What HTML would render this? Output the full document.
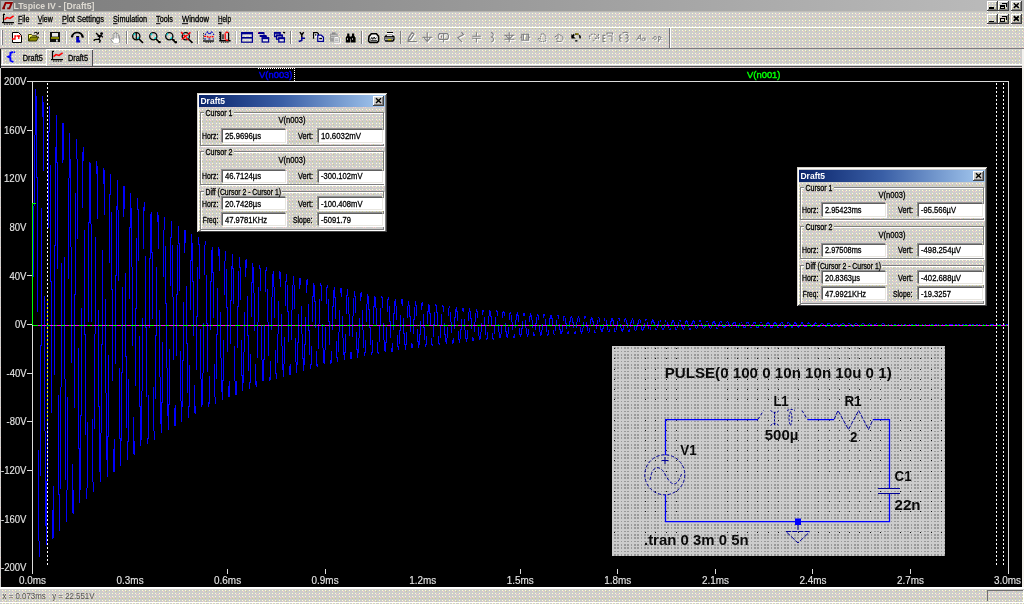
<!DOCTYPE html>
<html><head><meta charset="utf-8"><title>LTspice IV - [Draft5]</title>
<style>
html,body{margin:0;padding:0;}
body{width:1024px;height:604px;overflow:hidden;background:#d4d0c8;position:relative;
 font-family:"Liberation Sans",sans-serif;font-size:9px;color:#000;}
.a{position:absolute;}
#title{left:0;top:0;width:1024px;height:11px;background:linear-gradient(90deg,#7e7e7e 0%,#848484 15%,#bcbcbc 100%);}
#plot{left:1px;top:68px;width:1021px;height:519px;background:#000;}
svg{position:absolute;left:0;top:0;font-family:"Liberation Sans",sans-serif;will-change:transform;}
.dlg{position:absolute;width:190px;height:139px;background:#d4d0c8;
 box-shadow:inset 1px 1px 0 #d4d0c8,inset -1px -1px 0 #404040,inset 2px 2px 0 #fff,inset -2px -2px 0 #808080;}
.dt{position:absolute;left:2px;top:3px;width:186px;height:12px;background:linear-gradient(90deg,#0a246a 0%,#3a5fa6 45%,#a6caf0 100%);}
.grp{position:absolute;left:3px;width:184px;border:1px solid #808080;box-shadow:inset 1px 1px 0 #fff,1px 1px 0 #fff;box-sizing:border-box;}
.ed{position:absolute;width:64px;background:#fff;box-sizing:border-box;border:1px solid;border-color:#606060 #e8e6e0 #e8e6e0 #606060;box-shadow:-1px -1px 0 #909090,1px 1px 0 #fff;}
.gl{position:absolute;background:#d4d0c8;height:6px;}
</style></head><body>

<svg width="1024" height="604" viewBox="0 0 1024 604" shape-rendering="crispEdges"><defs><pattern id="dz" width="10" height="10" patternUnits="userSpaceOnUse"><rect width="10" height="10" fill="#cdcdcc"/><rect x="2" y="0" width="1" height="1" fill="#ffffcc"/><rect x="5" y="0" width="1" height="1" fill="#ffffcc"/><rect x="9" y="0" width="1" height="1" fill="#ffffcc"/><rect x="2" y="3" width="1" height="1" fill="#ffffcc"/><rect x="5" y="3" width="1" height="1" fill="#ffffcc"/><rect x="9" y="3" width="1" height="1" fill="#ffffcc"/><rect x="2" y="6" width="1" height="1" fill="#ffffcc"/><rect x="5" y="6" width="1" height="1" fill="#ffffcc"/><rect x="9" y="6" width="1" height="1" fill="#ffffcc"/><rect x="2" y="8" width="1" height="1" fill="#cccc8c"/><rect x="5" y="8" width="1" height="1" fill="#cccc8c"/><rect x="9" y="8" width="1" height="1" fill="#cccc8c"/><rect x="6" y="1" width="1" height="1" fill="#cccc8c"/><rect x="3" y="1" width="1" height="1" fill="#ffcccc"/><rect x="6" y="4" width="1" height="1" fill="#ffcccc"/><rect x="0" y="7" width="1" height="1" fill="#ffcccc"/><rect x="3" y="7" width="1" height="1" fill="#ffcccc"/><rect x="8" y="4" width="1" height="1" fill="#ffcccc"/></pattern><pattern id="ds" width="10" height="10" patternUnits="userSpaceOnUse"><rect width="10" height="10" fill="#cccccc"/><rect x="1" y="1" width="1" height="1" fill="#999999"/><rect x="1" y="4" width="1" height="2" fill="#999999"/><rect x="1" y="7" width="1" height="2" fill="#999999"/><rect x="4" y="1" width="2" height="1" fill="#999999"/><rect x="4" y="4" width="2" height="2" fill="#999999"/><rect x="4" y="7" width="2" height="2" fill="#999999"/><rect x="7" y="1" width="2" height="1" fill="#999999"/><rect x="7" y="4" width="2" height="2" fill="#999999"/><rect x="7" y="7" width="2" height="2" fill="#999999"/></pattern></defs><rect width="1024" height="604" fill="url(#dz)"/></svg>
<div id="title" class="a"></div>
<div class="a" style="left:0;top:11px;width:1024px;height:1px;background:linear-gradient(90deg,#a8a6a2,#c8c6c0)"></div>
<div class="a" style="left:1px;top:1px;width:12px;height:10px;background:#b4b4b4"></div>
<div class="a" style="left:0;top:27px;width:1024px;height:1px;background:#fff"></div>
<div class="a" style="left:0;top:48px;width:1024px;height:1px;background:#7c7c7c"></div>
<div class="a" style="left:0;top:64px;width:1022px;height:1px;background:#fff"></div>
<div class="a" style="left:0;top:66px;width:1022px;height:1px;background:#505050"></div>
<div class="a" style="left:0;top:49px;width:1px;height:19px;background:#181818"></div>
<div class="a" style="left:1022px;top:49px;width:2px;height:540px;background:#f4f2ee"></div>
<div class="a" style="left:2px;top:51px;width:1px;height:13px;background:#fff"></div>
<div class="a" style="left:46px;top:49px;width:47px;height:17px;box-shadow:inset 1px 1px 0 #fff,inset -1px 0 0 #505050;"></div>
<svg class="a" style="left:47px;top:64px" width="45" height="3" viewBox="47 64 45 3" shape-rendering="crispEdges"><rect x="47" y="64" width="45" height="1" fill="url(#dz)"/></svg>
<div id="plot" class="a"></div>
<div class="a" style="left:0;top:587px;width:1024px;height:2px;background:#fff"></div>
<div class="a" style="left:0;top:602px;width:1024px;height:1px;background:#fff"></div>
<div class="a" style="left:987px;top:590px;width:36px;height:11px;box-shadow:inset 1px 1px 0 #707070;"></div>
<div class="a" style="left:1023px;top:590px;width:1px;height:12px;background:#fff"></div>
<svg width="1024" height="604" viewBox="0 0 1024 604">
<path d="M2.2 8.4h2.8M3.4 8.4L5.6 2.9H11.7L9.4 8.4H7.2" fill="none" stroke="#8a0000" stroke-width="1.9"/>
<path d="M6.4 3.4h3.6" fill="none" stroke="#d00000" stroke-width="0.9"/>
<text x="13.5" y="9.0" font-size="9.2" font-weight="bold" fill="#dedad2" textLength="81.0" lengthAdjust="spacingAndGlyphs">LTspice IV - [Draft5]</text>
<g shape-rendering="crispEdges"><rect x="987" y="1" width="11" height="10" fill="url(#dz)"/><path d="M987 1h11M987.5 1v10" stroke="#fff" fill="none" transform="translate(0,0.5)"/><path d="M987 10.5h11M997.5 1v10" stroke="#404040" fill="none"/><path d="M988 9.5h9M996.5 2v8" stroke="#808080" fill="none"/><rect x="989" y="7" width="5" height="2" fill="#000"/></g>
<g shape-rendering="crispEdges"><rect x="998" y="1" width="11" height="10" fill="url(#dz)"/><path d="M998 1h11M998.5 1v10" stroke="#fff" fill="none" transform="translate(0,0.5)"/><path d="M998 10.5h11M1008.5 1v10" stroke="#404040" fill="none"/><path d="M999 9.5h9M1007.5 2v8" stroke="#808080" fill="none"/><path d="M1002.5 3.5h4v3M1002 3h5" stroke="#000" stroke-width="1" fill="none"/><rect x="1000.5" y="5.5" width="4" height="3" fill="#d4d0c8" stroke="#000"/><rect x="1000" y="5" width="5" height="2" fill="#000"/></g>
<g shape-rendering="crispEdges"><rect x="1011" y="1" width="11" height="10" fill="url(#dz)"/><path d="M1011 1h11M1011.5 1v10" stroke="#fff" fill="none" transform="translate(0,0.5)"/><path d="M1011 10.5h11M1021.5 1v10" stroke="#404040" fill="none"/><path d="M1012 9.5h9M1020.5 2v8" stroke="#808080" fill="none"/></g><path d="M1013.8 3.3l5 4.6M1018.8 3.3l-5 4.6" stroke="#000" stroke-width="1.5" fill="none"/>
<g shape-rendering="crispEdges"><rect x="987" y="14" width="11" height="10" fill="url(#dz)"/><path d="M987 14h11M987.5 14v10" stroke="#fff" fill="none" transform="translate(0,0.5)"/><path d="M987 23.5h11M997.5 14v10" stroke="#404040" fill="none"/><path d="M988 22.5h9M996.5 15v8" stroke="#808080" fill="none"/><rect x="989" y="21" width="5" height="1" fill="#000"/></g>
<g shape-rendering="crispEdges"><rect x="998" y="14" width="11" height="10" fill="url(#dz)"/><path d="M998 14h11M998.5 14v10" stroke="#fff" fill="none" transform="translate(0,0.5)"/><path d="M998 23.5h11M1008.5 14v10" stroke="#404040" fill="none"/><path d="M999 22.5h9M1007.5 15v8" stroke="#808080" fill="none"/><path d="M1002.5 16.5h4v3M1002 16h5" stroke="#000" stroke-width="1" fill="none"/><rect x="1000.5" y="18.5" width="4" height="3" fill="#d4d0c8" stroke="#000"/></g>
<g shape-rendering="crispEdges"><rect x="1011" y="14" width="11" height="10" fill="url(#dz)"/><path d="M1011 14h11M1011.5 14v10" stroke="#fff" fill="none" transform="translate(0,0.5)"/><path d="M1011 23.5h11M1021.5 14v10" stroke="#404040" fill="none"/><path d="M1012 22.5h9M1020.5 15v8" stroke="#808080" fill="none"/></g><path d="M1013.8 16.3l5 4.6M1018.8 16.3l-5 4.6" stroke="#000" stroke-width="1.9" fill="none"/>
<g transform="translate(2.0,13.8)"><rect x="1.5" y="0.5" width="10" height="8" fill="#c8ccc8"/><path d="M1 0.5h2M1.5 0v8.5M0 8.8h12" stroke="#000" stroke-width="1.2" fill="none"/><path d="M2 10.3h9" stroke="#000" stroke-width="1" stroke-dasharray="1.4 1" fill="none"/><path d="M2.5 5.8L5 3.8 8 4.6 11.6 2" stroke="#f00" stroke-width="1.5" fill="none"/></g>
<text x="17.9" y="22.3" font-size="8.8" fill="#000" stroke="#000" stroke-width="0.30" textLength="11.5" lengthAdjust="spacingAndGlyphs">File</text>
<path d="M17.9 23.7h4.5" stroke="#000" stroke-width="1"/>
<text x="37.8" y="22.3" font-size="8.8" fill="#000" stroke="#000" stroke-width="0.30" textLength="15.0" lengthAdjust="spacingAndGlyphs">View</text>
<path d="M37.8 23.7h4.5" stroke="#000" stroke-width="1"/>
<text x="62.0" y="22.3" font-size="8.8" fill="#000" stroke="#000" stroke-width="0.30" textLength="42.0" lengthAdjust="spacingAndGlyphs">Plot Settings</text>
<path d="M62.0 23.7h4.5" stroke="#000" stroke-width="1"/>
<text x="113.0" y="22.3" font-size="8.8" fill="#000" stroke="#000" stroke-width="0.30" textLength="34.0" lengthAdjust="spacingAndGlyphs">Simulation</text>
<path d="M113.0 23.7h4.5" stroke="#000" stroke-width="1"/>
<text x="156.0" y="22.3" font-size="8.8" fill="#000" stroke="#000" stroke-width="0.30" textLength="17.0" lengthAdjust="spacingAndGlyphs">Tools</text>
<path d="M156.0 23.7h4.5" stroke="#000" stroke-width="1"/>
<text x="182.0" y="22.3" font-size="8.8" fill="#000" stroke="#000" stroke-width="0.30" textLength="27.0" lengthAdjust="spacingAndGlyphs">Window</text>
<path d="M182.0 23.7h6.0" stroke="#000" stroke-width="1"/>
<text x="218.0" y="22.3" font-size="8.8" fill="#000" stroke="#000" stroke-width="0.30" textLength="13.0" lengthAdjust="spacingAndGlyphs">Help</text>
<path d="M218.0 23.7h4.5" stroke="#000" stroke-width="1"/>
<path d="M43.5 31v13" stroke="#808080" stroke-opacity="0.35"/><path d="M44.5 31v13" stroke="#fff" stroke-opacity="1.00"/>
<path d="M65.5 31v13" stroke="#808080" stroke-opacity="0.35"/><path d="M66.5 31v13" stroke="#fff" stroke-opacity="1.00"/>
<path d="M87.5 31v13" stroke="#808080" stroke-opacity="0.35"/><path d="M88.5 31v13" stroke="#fff" stroke-opacity="1.00"/>
<path d="M126.5 31v13" stroke="#808080" stroke-opacity="1.00"/><path d="M127.5 31v13" stroke="#fff" stroke-opacity="1.00"/>
<path d="M197.5 31v13" stroke="#808080" stroke-opacity="1.00"/><path d="M198.5 31v13" stroke="#fff" stroke-opacity="1.00"/>
<path d="M235.5 31v13" stroke="#808080" stroke-opacity="0.35"/><path d="M236.5 31v13" stroke="#fff" stroke-opacity="1.00"/>
<path d="M290.5 31v13" stroke="#808080" stroke-opacity="1.00"/><path d="M291.5 31v13" stroke="#fff" stroke-opacity="1.00"/>
<path d="M361.5 31v13" stroke="#808080" stroke-opacity="1.00"/><path d="M362.5 31v13" stroke="#fff" stroke-opacity="1.00"/>
<path d="M400.5 31v13" stroke="#808080" stroke-opacity="1.00"/><path d="M401.5 31v13" stroke="#fff" stroke-opacity="0.40"/>
<path d="M669.5 28v20" stroke="#707070"/><path d="M670.5 28v20" stroke="#fff"/>
<path d="M1.5 30v15" stroke="#fff"/><path d="M2.5 30v15" stroke="#808080"/>
<g transform="translate(12.0,32.0)"><path d="M0.5 0.5h6l3 3v7h-9z" fill="#fff" stroke="#000"/><path d="M0 7h3v-3h1.5M5 4h3.5M6.8 4v3" stroke="#f00" stroke-width="1.3" fill="none"/></g>
<g transform="translate(28.0,32.0)"><path d="M0.5 9V2.5h3l1 1.2h4V5" fill="#ffff66" stroke="#404000"/><path d="M0.5 9l2.2-4h8l-2.4 4z" fill="#8c8c00" stroke="#303000"/><path d="M6 1.2c1.5-1.3 3-1 3.8 0.3M10.3 0v2h-2" stroke="#000" fill="none"/></g>
<g transform="translate(50.0,32.0)"><rect x="0" y="0" width="10" height="10" fill="#101010"/><rect x="2" y="1" width="6" height="3.6" fill="#e8e8e8"/><rect x="1" y="5.2" width="8" height="1.6" fill="#a0a000"/><rect x="6" y="7.6" width="1.8" height="2" fill="#e0e0e0"/></g>
<g transform="translate(71.0,32.0)"><path d="M0.9 5.4C1.2 2.6 3.6 0.9 6.2 0.9 9 0.9 11.4 2.8 11.9 5.6" stroke="#000" stroke-width="2.3" fill="none"/><path d="M2.6 3.6C3.8 2.2 5 1.8 6.3 1.8 7.6 1.8 9 2.4 10 3.6" stroke="#fff" stroke-width="0.9" fill="none"/><path d="M5.2 4.6h3v3.6h1v2.4h-4z" fill="#0000c0"/><path d="M5.2 4.6h3" stroke="#000" stroke-width="1"/></g>
<g transform="translate(93.0,32.0)"><circle cx="8.6" cy="1.6" r="1.4" fill="#000"/><path d="M3 1l2.6 2.6M4.6 4.2l3.4-0.8 1.8 2M7.6 3.6L5.8 7.2 2 7.6 0.6 8.6M5.8 7l1.4 1.6-0.8 2.2" stroke="#000" stroke-width="1.4" fill="none"/></g>
<g transform="translate(110.0,32.0)"><path d="M3.5 11.5C2.5 9.5 0.8 8 0.8 7 1.6 6 2.6 6.6 3.2 7.4V2.2c0.4-1 1.4-1 1.6 0V1c0.4-1 1.6-1 1.8 0v1.2c0.4-1 1.6-0.8 1.6 0.2V4c0.4-0.8 1.4-0.6 1.4 0.4V8.5c0 1.5-0.6 2.4-1 3z" fill="#fff" stroke="#8c8c8c" stroke-width="1"/><path d="M4.9 2.4v4M6.7 2.2v4.2M8.3 3.4v3.2" stroke="#909090" stroke-width="0.9" fill="none"/><path d="M3.2 11.9h6" stroke="#fff" stroke-width="1"/></g>
<g transform="translate(132.0,32.0)"><circle cx="4.3" cy="4.2" r="3.6" fill="none" stroke="#000" stroke-width="1.3"/><path d="M1.8 3.2a2.6 2.6 0 0 1 1.4-1.6M5 6.6a2.6 2.6 0 0 0 1.8-1.8" stroke="#00e0e0" stroke-width="1.2" fill="none"/><path d="M7 7l4 3.8" stroke="#000" stroke-width="1.6"/><path d="M4.3 1v6.4" stroke="#000" stroke-width="1.2"/></g>
<g transform="translate(149.0,32.0)"><circle cx="4.3" cy="4.2" r="3.6" fill="none" stroke="#000" stroke-width="1.3"/><path d="M1.8 3.2a2.6 2.6 0 0 1 1.4-1.6M5 6.6a2.6 2.6 0 0 0 1.8-1.8" stroke="#00e0e0" stroke-width="1.2" fill="none"/><path d="M7 7l4 3.8" stroke="#000" stroke-width="1.6"/><rect x="9.4" y="9" width="2.2" height="2" fill="#000"/></g>
<g transform="translate(165.0,32.0)"><circle cx="4.3" cy="4.2" r="3.6" fill="none" stroke="#000" stroke-width="1.3"/><path d="M1.8 3.2a2.6 2.6 0 0 1 1.4-1.6M5 6.6a2.6 2.6 0 0 0 1.8-1.8" stroke="#00e0e0" stroke-width="1.2" fill="none"/><path d="M7 7l4 3.8" stroke="#000" stroke-width="1.6"/><rect x="7.8" y="7.2" width="1.8" height="1.8" fill="#000"/><rect x="9.8" y="9.2" width="2.2" height="2" fill="#000"/></g>
<g transform="translate(181.5,32.0)"><circle cx="4.3" cy="4.2" r="3.6" fill="none" stroke="#000" stroke-width="1.3"/><path d="M1.8 3.2a2.6 2.6 0 0 1 1.4-1.6M5 6.6a2.6 2.6 0 0 0 1.8-1.8" stroke="#00e0e0" stroke-width="1.2" fill="none"/><path d="M7 7l4 3.8" stroke="#000" stroke-width="1.6"/><path d="M-0.4 0l7.6 8.6M9 0.4l-9 7.2" stroke="#f00" stroke-width="1.5" stroke-dasharray="3 0.7"/></g>
<g transform="translate(203.0,31.6)"><path d="M2 3.2l2.6-3 2 2.6 2-2.6 2.4 3" stroke="#0000c0" stroke-width="1.1" stroke-dasharray="1.6 1" fill="none"/><path d="M1 4.8h3l2 1.2 2-1.2 2.6 0.4" stroke="#f00" stroke-width="1.3" stroke-dasharray="2 0.8" fill="none"/><path d="M1 7.4h10" stroke="#0000a0" stroke-width="1" stroke-dasharray="2 2.4" fill="none"/><path d="M0.5 1.6v7" stroke="#000" stroke-dasharray="1 1.2"/><path d="M0 9.4h11" stroke="#000" stroke-width="1.3"/><path d="M2.5 10.6h7" stroke="#000" stroke-dasharray="1.2 1"/></g>
<g transform="translate(219.0,31.6)"><path d="M1.6 0.6v8.6M0 1h2.4M0.2 9.2h11.4" stroke="#000" stroke-width="1.5" fill="none"/><path d="M0.2 3h1.4M0.2 5h1.4M0.2 7h1.4M2 10.6h8" stroke="#000" stroke-dasharray="1.2 0.9"/><path d="M4 2.6v5M9.6 1v8.4" stroke="#000" stroke-width="1.2"/><path d="M6.6 1.4a2 3.4 0 0 1 2.6 0M6.8 8a2 3 0 0 0 2.4 0.2M6.2 1.6v6.2" stroke="#f00" stroke-width="1.3" fill="none"/></g>
<g transform="translate(241.0,32.0)"><rect x="0.6" y="0.6" width="10.8" height="9.6" fill="none" stroke="#000090" stroke-width="1.2"/><rect x="1" y="1" width="10" height="1.3" fill="#000090"/><rect x="1" y="5" width="10" height="1.6" fill="#000090"/><path d="M2 3.4h8M2 7.8h8" stroke="#e8e8e8" stroke-width="0.8"/></g>
<g transform="translate(258.0,32.0)"><rect x="0" y="0" width="6.4" height="2" fill="#000090"/><rect x="1.6" y="3" width="7" height="2" fill="#000090"/><path d="M8.2 4v2M6 1.4v1.4" stroke="#000090" stroke-width="1.2"/><rect x="4.2" y="5.8" width="6.4" height="4.2" fill="#e8e8e8" stroke="#000090" stroke-width="1.3"/><rect x="3.8" y="5.4" width="7.2" height="1.8" fill="#000090"/><path d="M0 0l1 1" stroke="#c00060" stroke-width="1"/></g>
<g transform="translate(274.0,32.0)"><rect x="0.6" y="0.6" width="5.4" height="4" fill="none" stroke="#000090" stroke-width="1.3"/><rect x="0" y="0" width="6.6" height="1.8" fill="#000090"/><rect x="2.6" y="3.2" width="5.6" height="4" fill="#d4d0c8" stroke="#000090" stroke-width="1.3"/><rect x="2" y="2.6" width="6.8" height="1.8" fill="#000090"/><rect x="4.8" y="6" width="5.6" height="4" fill="#e8e8e8" stroke="#000090" stroke-width="1.3"/><rect x="4.2" y="5.4" width="6.8" height="1.8" fill="#000090"/><path d="M9 0.4l1.6 0.2 0 1" stroke="#000" stroke-width="1.1" fill="none"/></g>
<g transform="translate(298.5,32.0)"><path d="M1.4 0.2l2 3M5.2 0.2l-2 3M3.3 2.6v2.6" stroke="#000" stroke-width="1.5" fill="none"/><path d="M3.3 5v4M3.3 6.2h3.2M3.3 8.6l-2.4 0.6 0.4 0.8" stroke="#000090" stroke-width="1.5" fill="none"/></g>
<g transform="translate(313.0,32.0)"><path d="M0.6 6.8V0.6h3.6l1.2 1.2v2" stroke="#000" stroke-width="1.3" fill="#fff"/><rect x="2" y="2.2" width="1.4" height="1.4" fill="#000"/><path d="M4.8 3.2h3.4l2.2 2v4.2h-5.6z" fill="#fff" stroke="#000090" stroke-width="1.3"/><rect x="6.2" y="5.8" width="2.8" height="1.5" fill="#000"/></g>
<g transform="translate(329.0,32.0)"><rect x="1" y="1.6" width="7.6" height="8" fill="#9c9c9c"/><rect x="3" y="0.4" width="3.6" height="2" fill="#8a8a8a"/><path d="M2 3.4h5.6M2 5.4h3" stroke="#c8c8c8"/><path d="M5 4.6h4l1.6 1.6V10.4h-5.6z" fill="#fff" stroke="#a4a4a4" stroke-width="0.9"/><path d="M6 7h3.6M6 8.8h3.6" stroke="#909090" stroke-width="0.9"/><path d="M5 11.2h6.6v-5" stroke="#fff" fill="none"/></g>
<g transform="translate(345.6,33.0)"><path d="M1.6 0.6h2.2v2.2l1 2v4.8H0.2V4.6l1.4-2zM6.4 0.6h2.2v2.2l1.4 2v4.8H5.4V4.6l1-2z" fill="#000"/><rect x="3.8" y="3.6" width="2.6" height="2.2" fill="#000"/><rect x="1.4" y="5.4" width="1" height="1.2" fill="#fff"/><rect x="6.4" y="5.4" width="1" height="1.2" fill="#fff"/></g>
<g transform="translate(368.0,33.0)"><path d="M1 3.4L3.4 0.8h5L10.6 3.4V8l-1.4 1.4H1.8L0.6 8z" fill="#f4f4f4" stroke="#000" stroke-width="1.6"/><path d="M2.6 6.6l1.2-2.2 1 2 1.4-2.4 1 2.2 1.2-1.6" stroke="#000" stroke-width="0.9" fill="none"/><path d="M2.4 7.6h6.6" stroke="#000" stroke-width="0.8"/></g>
<g transform="translate(384.0,32.0)"><path d="M3 0.6h6" stroke="#000" stroke-width="1.2"/><path d="M2.4 1.8h6l1.6 1.4" stroke="#fff" stroke-width="1.4" fill="none"/><path d="M0.4 4.4L2.2 2.8h6.4l2 1.6V8l-1.4 1.8H1.4L0.4 8z" fill="#000"/><path d="M2.8 3.6h5.6" stroke="#fff" stroke-width="1"/><path d="M1 6h8.6" stroke="#e8e8e8" stroke-width="1"/><path d="M4 7.7h3.4" stroke="#e8e000" stroke-width="1.3"/><path d="M1 7.7h3M7.4 7.7h1.6" stroke="#d0d0d0" stroke-width="1"/></g>
<g transform="translate(408.0,33.0)" stroke="#fff" fill="none"><path d="M5 0.6l2 1.6-3.6 5.2-2.2 1.2 0.4-2.6zM0.6 9.6h9.2" stroke-width="1.3"/></g><g transform="translate(407.0,32.0)" stroke="#808080" fill="none"><path d="M5 0.6l2 1.6-3.6 5.2-2.2 1.2 0.4-2.6zM0.6 9.6h9.2" stroke-width="1.3"/></g>
<g transform="translate(423.0,33.0)" stroke="#fff" fill="none"><path d="M5.2 0.2v9.6M0.2 5.2h10.2M2 5.6l3.2 4 3.2-4" stroke-width="1.1"/></g><g transform="translate(422.0,32.0)" stroke="#808080" fill="none"><path d="M5.2 0.2v9.6M0.2 5.2h10.2M2 5.6l3.2 4 3.2-4" stroke-width="1.1"/></g>
<g transform="translate(439.0,34.0)" stroke="#fff" fill="none"><path d="M1.6 0.6h7.6l1.2 1.6v2.6l-1.2 1.6H1.6L0.4 4.8V2.2zM5.6 0.6v8.6M3.6 2.4v2.4" stroke-width="1.1"/></g><g transform="translate(438.0,33.0)" stroke="#808080" fill="none"><path d="M1.6 0.6h7.6l1.2 1.6v2.6l-1.2 1.6H1.6L0.4 4.8V2.2zM5.6 0.6v8.6M3.6 2.4v2.4" stroke-width="1.1"/></g>
<g transform="translate(458.0,33.0)" stroke="#fff" fill="none"><path d="M4.4 0.2L6.6 2.6 0.8 5.6 5 10.2" stroke-width="1.1"/></g><g transform="translate(457.0,32.0)" stroke="#808080" fill="none"><path d="M4.4 0.2L6.6 2.6 0.8 5.6 5 10.2" stroke-width="1.1"/></g>
<g transform="translate(473.0,33.0)" stroke="#fff" fill="none"><path d="M4.4 0.2v4M0.2 4.2h8.6M0.2 6.2h8.6M4.4 6.2v4" stroke-width="1.1"/></g><g transform="translate(472.0,32.0)" stroke="#808080" fill="none"><path d="M4.4 0.2v4M0.2 4.2h8.6M0.2 6.2h8.6M4.4 6.2v4" stroke-width="1.1"/></g>
<g transform="translate(491.0,33.0)" stroke="#fff" fill="none"><path d="M1 0.2c3 1.4 3 3.4 0.4 4.8 3 1.4 3 3.6 0 5" stroke-width="1.1"/></g><g transform="translate(490.0,32.0)" stroke="#808080" fill="none"><path d="M1 0.2c3 1.4 3 3.4 0.4 4.8 3 1.4 3 3.6 0 5" stroke-width="1.1"/></g>
<g transform="translate(505.0,33.0)" stroke="#fff" fill="none"><path d="M5.2 0.2v10M0.2 3.2h10.2M0.4 7.2h10M1.6 3.4l3.6 3.8 3.6-3.8" stroke-width="1.1"/></g><g transform="translate(504.0,32.0)" stroke="#808080" fill="none"><path d="M5.2 0.2v10M0.2 3.2h10.2M0.4 7.2h10M1.6 3.4l3.6 3.8 3.6-3.8" stroke-width="1.1"/></g>
<g transform="translate(521.0,34.0)" stroke="#fff" fill="none"><path d="M0.2 4.2h1.6M8.6 4.2h1.6M1.8 1.2h6.8v6H1.8zM3.4 1.2v6M7 1.2v6" stroke-width="1.1"/></g><g transform="translate(520.0,33.0)" stroke="#808080" fill="none"><path d="M0.2 4.2h1.6M8.6 4.2h1.6M1.8 1.2h6.8v6H1.8zM3.4 1.2v6M7 1.2v6" stroke-width="1.1"/></g>
<g transform="translate(538.0,33.0)" stroke="#fff" fill="none"><path d="M2 6.4l-1.4 0.8M3 9.6c-1-1.6-1.6-2.4-1-3 0.6-0.4 1.2 0.2 1.6 0.8V3c0.4-0.8 1.2-0.6 1.4 0V1.4c0.4-0.8 1.2-0.6 1.4 0V2.4c0.4-0.8 1.2-0.4 1.2 0.2V3.6c0.4-0.6 1.2-0.4 1.2 0.4V7.4c0 1-0.4 1.6-0.8 2.2z" stroke-width="1" stroke-dasharray="1.6 0.8"/></g><g transform="translate(537.0,32.0)" stroke="#808080" fill="none"><path d="M2 6.4l-1.4 0.8M3 9.6c-1-1.6-1.6-2.4-1-3 0.6-0.4 1.2 0.2 1.6 0.8V3c0.4-0.8 1.2-0.6 1.4 0V1.4c0.4-0.8 1.2-0.6 1.4 0V2.4c0.4-0.8 1.2-0.4 1.2 0.2V3.6c0.4-0.6 1.2-0.4 1.2 0.4V7.4c0 1-0.4 1.6-0.8 2.2z" stroke-width="1" stroke-dasharray="1.6 0.8"/></g>
<g transform="translate(555.0,33.0)" stroke="#fff" fill="none"><path d="M0.6 5.2l3-2.2M2.4 9.6h5.2M3.6 8.6c-1-1.4-1.4-2-0.8-2.6 0.6-0.2 1 0.2 1.2 0.6V2.4c0.4-0.8 1.2-0.6 1.4 0.2l2.6 1.6c0.8 0.4 1 1 1 2 0 1.2-0.6 1.8-1 2.4" stroke-width="1"/></g><g transform="translate(554.0,32.0)" stroke="#808080" fill="none"><path d="M0.6 5.2l3-2.2M2.4 9.6h5.2M3.6 8.6c-1-1.4-1.4-2-0.8-2.6 0.6-0.2 1 0.2 1.2 0.6V2.4c0.4-0.8 1.2-0.6 1.4 0.2l2.6 1.6c0.8 0.4 1 1 1 2 0 1.2-0.6 1.8-1 2.4" stroke-width="1"/></g>
<g transform="translate(571.0,33.0)"><path d="M1.2 4.2C2.2 1.2 5.4 0.2 7.6 1.6 9 2.6 9.6 4.2 8.8 6" stroke="#000" stroke-width="1.6" fill="none" stroke-dasharray="3.4 1"/><path d="M0.4 1v4.4h4.2z" fill="#000"/><path d="M4.6 1a4 4 0 0 1 2.8 0.4" stroke="#a09000" stroke-width="1.4" fill="none"/><rect x="4.2" y="7.2" width="2.2" height="1.3" fill="#000"/></g>
<g transform="translate(590.0,34.0)" stroke="#fff" fill="none"><path d="M8.4 4.2C7.4 1.2 4.2 0.2 2 1.6 0.6 2.6 0 4.2 0.8 6M9.4 1v4.4H5.2M3.6 7.8h2.2" stroke-width="1.1" stroke-dasharray="2 1"/></g><g transform="translate(589.0,33.0)" stroke="#808080" fill="none"><path d="M8.4 4.2C7.4 1.2 4.2 0.2 2 1.6 0.6 2.6 0 4.2 0.8 6M9.4 1v4.4H5.2M3.6 7.8h2.2" stroke-width="1.1" stroke-dasharray="2 1"/></g>
<g transform="translate(603.0,33.0)" stroke="#fff" fill="none"><path d="M1 3v7M1 3.4h2.4M1 6.4h2M1 9.6h2.4M5 2.8V1h5.4v1.8M5.4 4h4.8M10 4.4v5.4" stroke-width="1.1"/></g><g transform="translate(602.0,32.0)" stroke="#808080" fill="none"><path d="M1 3v7M1 3.4h2.4M1 6.4h2M1 9.6h2.4M5 2.8V1h5.4v1.8M5.4 4h4.8M10 4.4v5.4" stroke-width="1.1"/></g>
<g transform="translate(619.0,33.0)" stroke="#fff" fill="none"><path d="M3.4 2.6C1 3 1 5.4 3 6 1 6.6 1 9 3.4 9.6M4.4 1.2C6 0.2 8.8 0.2 10.4 1.4M8.4 2.6C10.8 3 10.8 5.4 8.8 6 10.8 6.6 10.8 9 8.4 9.6M7.6 2.6h2M7.6 9.6h2" stroke-width="1.1"/></g><g transform="translate(618.0,32.0)" stroke="#808080" fill="none"><path d="M3.4 2.6C1 3 1 5.4 3 6 1 6.6 1 9 3.4 9.6M4.4 1.2C6 0.2 8.8 0.2 10.4 1.4M8.4 2.6C10.8 3 10.8 5.4 8.8 6 10.8 6.6 10.8 9 8.4 9.6M7.6 2.6h2M7.6 9.6h2" stroke-width="1.1"/></g>
<g transform="translate(637.0,35.0)" stroke="#fff" fill="none"><path d="M0.2 6.6L4.4 0.6 5 6.6M1.8 4.4h3M7.4 4a1.4 1.4 0 1 0 0.1 0M9 3.6v3" stroke-width="1"/></g><g transform="translate(636.0,34.0)" stroke="#808080" fill="none"><path d="M0.2 6.6L4.4 0.6 5 6.6M1.8 4.4h3M7.4 4a1.4 1.4 0 1 0 0.1 0M9 3.6v3" stroke-width="1"/></g>
<g transform="translate(653.0,35.0)" stroke="#fff" fill="none"><path d="M0.4 4.4h0.8M3 2.4a1.3 1.6 0 1 0 0.1 0M6.6 2.2V8M6.8 2.6a1.3 1.6 0 1 1-0.1 3M9.6 3v0.6M9.6 5v0.6" stroke-width="1"/></g><g transform="translate(652.0,34.0)" stroke="#808080" fill="none"><path d="M0.4 4.4h0.8M3 2.4a1.3 1.6 0 1 0 0.1 0M6.6 2.2V8M6.8 2.6a1.3 1.6 0 1 1-0.1 3M9.6 3v0.6M9.6 5v0.6" stroke-width="1"/></g>
<path d="M13 52l-2.6 1v2.6l-2.2 1.2 2.2 1.2v2.6l3 1.4" stroke="#0000ff" stroke-width="1.9" fill="none"/><rect x="13.6" y="51.4" width="1.5" height="1.5" fill="#0000ff"/>
<text x="22.8" y="61.0" font-size="8.8" fill="#000" stroke="#000" stroke-width="0.30" textLength="20.0" lengthAdjust="spacingAndGlyphs">Draft5</text>
<g transform="translate(51.0,50.8)"><rect x="1.5" y="0.5" width="10" height="8" fill="#c8ccc8"/><path d="M1 0.5h2M1.5 0v8.5M0 8.8h12" stroke="#000" stroke-width="1.2" fill="none"/><path d="M2 10.3h9" stroke="#000" stroke-width="1" stroke-dasharray="1.4 1" fill="none"/><path d="M2.5 5.8L5 3.8 8 4.6 11.6 2" stroke="#f00" stroke-width="1.5" fill="none"/></g>
<text x="68.0" y="60.6" font-size="8.8" fill="#000" stroke="#000" stroke-width="0.30" textLength="20.0" lengthAdjust="spacingAndGlyphs">Draft5</text>
<text x="2.5" y="598.6" font-size="8.6" fill="#000" textLength="92.0" lengthAdjust="spacingAndGlyphs" fill-opacity="0.62">x = 0.073ms &#160; y = 22.551V</text>
<g shape-rendering="crispEdges">
<path d="M33.5 206V277M34.5 135V206M35.5 89V135M36.5 96V178M37.5 177V312M38.5 450V541M39.5 541V557M40.5 345V476M41.5 208V346M42.5 96V117M43.5 102V171M44.5 296V431M45.5 431V526M46.5 481V545M47.5 360V482M48.5 131V228M49.5 106V132M50.5 165V282M51.5 281V413M52.5 510V539M53.5 486V538M54.5 245V375M55.5 147V246M56.5 115V163M57.5 162V269M58.5 395V495M59.5 494V531M60.5 387V489M61.5 263V387M62.5 123V163M63.5 123V160M64.5 257V379M65.5 379V480M66.5 490V522M67.5 397V490M68.5 178V279M69.5 133V178M70.5 159V247M71.5 247V363M72.5 464V513M73.5 490V514M74.5 294V408M75.5 193V295M76.5 139V159M77.5 159V239M78.5 348V449M79.5 448V503M80.5 415V490M81.5 308V416M82.5 152V208M83.5 147V161M84.5 230V335M85.5 334V435M86.5 488V499M87.5 422V488M88.5 222V322M89.5 162V223M90.5 163V224M91.5 224V322M92.5 419V482M93.5 482V492M94.5 334V429M95.5 237V334M96.5 161V174M97.5 166V219M98.5 310V407M99.5 406V472M100.5 433V482M101.5 344V433M102.5 250V345M103.5 168V184M104.5 170V215M105.5 299V393M106.5 393V460M107.5 436V477M108.5 355V437M109.5 194V263M110.5 174V195M111.5 212V290M112.5 289V381M113.5 449V472M114.5 439V472M115.5 275V364M116.5 206V276M117.5 180V210M118.5 210V281M119.5 368V439M120.5 438V466M121.5 372V441M122.5 287V373M123.5 186V217M124.5 186V209M125.5 273V357M126.5 356V428M127.5 441V460M128.5 379V442M129.5 227V299M130.5 193V228M131.5 208V267M132.5 267V346M133.5 417V454M134.5 441V455M135.5 308V386M136.5 238V309M137.5 198V210M138.5 209V261M139.5 336V407M140.5 406V446M141.5 391V440M142.5 318V391M143.5 207V249M144.5 202V211M145.5 256V328M146.5 327V397M147.5 438V444M148.5 395V439M149.5 258V328M150.5 214V259M151.5 212V253M152.5 252V319M153.5 387V431M154.5 431V440M155.5 335V399M156.5 267V336M157.5 212V222M158.5 215V249M159.5 310V377M160.5 377V424M161.5 402V433M162.5 342V403M163.5 230V277M164.5 217V230M165.5 246V304M166.5 303V368M167.5 368V416M168.5 404V430M169.5 349V405M170.5 237V286M171.5 221V238M172.5 245V297M173.5 297V360M174.5 408V426M175.5 405V426M176.5 294V356M177.5 245V295M178.5 226V244M179.5 243V291M180.5 351V401M181.5 401V422M182.5 360V407M183.5 302V361M184.5 230V253M185.5 230V243M186.5 286V344M187.5 343V393M188.5 406V418M189.5 365V407M190.5 260V310M191.5 234V261M192.5 243V282M193.5 281V336M194.5 385V413M195.5 406V414M196.5 316V370M197.5 267V317M198.5 237V245M199.5 244V279M200.5 329V379M201.5 379V407M202.5 373V405M203.5 323V373M204.5 245V275M205.5 241V245M206.5 275V324M207.5 323V372M208.5 402V407M209.5 376V404M210.5 281V330M211.5 250V282M212.5 247V273M213.5 272V318M214.5 364V397M215.5 397V404M216.5 334V379M217.5 288V335M218.5 247V256M219.5 249V271M220.5 312V358M221.5 358V392M222.5 380V400M223.5 340V381M224.5 261V295M225.5 251V261M226.5 269V308M227.5 307V352M228.5 386V397M229.5 381V397M230.5 300V344M231.5 266V301M232.5 254V269M233.5 268V304M234.5 346V381M235.5 381V395M236.5 381V395M237.5 306V348M238.5 271V307M239.5 257V268M240.5 267V300M241.5 340V376M242.5 375V391M243.5 352V383M244.5 312V352M245.5 260V277M246.5 259V268M247.5 296V336M248.5 335V371M249.5 382V389M250.5 354V383M251.5 282V317M252.5 263V283M253.5 267V293M254.5 293V331M255.5 364V385M256.5 381V387M257.5 322V358M258.5 287V322M259.5 265V269M260.5 268V291M261.5 326V360M262.5 360V381M263.5 359V381M264.5 326V360M265.5 270V292M266.5 267V271M267.5 289V322M268.5 322V356M269.5 377V381M270.5 361V380M271.5 297V330M272.5 274V297M273.5 271V287M274.5 287V318M275.5 350V374M276.5 373V379M277.5 334V363M278.5 301V334M279.5 271V279M280.5 272V287M281.5 314V346M282.5 346V370M283.5 364V377M284.5 337V364M285.5 281V306M286.5 274V282M287.5 285V312M288.5 311V342M289.5 366V375M290.5 364V375M291.5 310V340M292.5 285V310M293.5 276V285M294.5 285V309M295.5 338V362M296.5 362V373M297.5 342V365M298.5 314V343M299.5 278V289M300.5 278V285M301.5 306V334M302.5 334V359M303.5 358V371M304.5 344V365M305.5 317V345M306.5 280V293M307.5 279V285M308.5 304V331M309.5 330V355M310.5 364V369M311.5 346V365M312.5 296V322M313.5 283V297M314.5 285V302M315.5 301V328M316.5 351V366M317.5 364V367M318.5 324V349M319.5 299V324M320.5 283V286M321.5 285V301M322.5 324V348M323.5 348V363M324.5 350V364M325.5 327V350M326.5 287V304M327.5 285V288M328.5 299V322M329.5 321V345M330.5 360V364M331.5 351V363M332.5 306V330M333.5 290V307M334.5 287V298M335.5 297V319M336.5 341V358M337.5 357V362M338.5 332V352M339.5 310V332M340.5 288V293M341.5 288V297M342.5 316V338M343.5 338V355M344.5 352V360M345.5 334V353M346.5 295V314M347.5 289V296M348.5 297V314M349.5 314V336M350.5 352V359M351.5 352V359M352.5 316V337M353.5 298V316M354.5 291V297M355.5 296V313M356.5 332V350M357.5 349V358M358.5 338V353M359.5 318V338M360.5 293V301M361.5 292V297M362.5 310V330M363.5 330V348M364.5 352V356M365.5 340V353M366.5 304V322M367.5 294V304M368.5 296V310M369.5 309V328M370.5 327V345M371.5 352V355M372.5 340V353M373.5 306V324M374.5 296V307M375.5 297V308M376.5 308V326M377.5 342V353M378.5 352V354M379.5 325V342M380.5 308V326M381.5 296V298M382.5 297V308M383.5 323V340M384.5 340V351M385.5 342V352M386.5 327V343M387.5 299V312M388.5 297V300M389.5 306V322M390.5 321V338M391.5 348V352M392.5 343V352M393.5 313V330M394.5 301V314M395.5 299V306M396.5 306V320M397.5 335V347M398.5 346V350M399.5 330V344M400.5 315V331M401.5 299V304M402.5 299V306M403.5 318V334M404.5 333V345M405.5 344V350M406.5 332V345M407.5 306V318M408.5 301V306M409.5 305V317M410.5 316V332M411.5 343V348M412.5 344V348M413.5 319V334M414.5 307V320M415.5 301V306M416.5 305V316M417.5 329V342M418.5 341V348M419.5 334V345M420.5 321V335M421.5 303V310M422.5 302V306M423.5 314V328M424.5 327V340M425.5 344V347M426.5 336V345M427.5 311V324M428.5 304V312M429.5 305V314M430.5 313V326M431.5 338V345M432.5 344V346M433.5 324V337M434.5 312V325M435.5 304V306M436.5 305V313M437.5 312V325M438.5 336V344M439.5 343V345M440.5 326V338M441.5 314V326M442.5 305V307M443.5 306V312M444.5 323V335M445.5 334V342M446.5 338V344M447.5 327V338M448.5 308V316M449.5 306V308M450.5 312V322M451.5 322V333M452.5 340V344M453.5 338V343M454.5 317V329M455.5 309V318M456.5 307V312M457.5 311V321M458.5 331V340M459.5 339V343M460.5 329V339M461.5 319V330M462.5 308V311M463.5 308V312M464.5 319V330M465.5 330V339M466.5 338V342M467.5 330V339M468.5 312V321M469.5 308V312M470.5 311V319M471.5 318V329M472.5 337V341M473.5 338V341M474.5 322V332M475.5 313V322M476.5 309V312M477.5 311V318M478.5 327V336M479.5 336V340M480.5 332V339M481.5 323V332M482.5 310V315M483.5 310V312M484.5 317V326M485.5 326V335M486.5 338V340M487.5 332V339M488.5 316V324M489.5 310V316M490.5 311V317M491.5 316V326M492.5 333V339M493.5 338V340M494.5 325V334M495.5 317V326M496.5 310V312M497.5 311V316M498.5 324V332M499.5 332V338M500.5 334V338M501.5 326V334M502.5 312V318M503.5 311V313M504.5 312V316M505.5 323V332M506.5 331V337M507.5 334V338M508.5 327V334M509.5 313V320M510.5 312V314M511.5 315V322M512.5 322V330M513.5 336V338M514.5 334V338M515.5 320V328M516.5 314V320M517.5 312V316M518.5 315V322M519.5 328V335M520.5 334V337M521.5 328V335M522.5 321V329M523.5 313V316M524.5 313V316M525.5 320V328M526.5 328V334M527.5 334V337M528.5 329V335M529.5 316V322M530.5 313V317M531.5 315V320M532.5 320V328M533.5 332V336M534.5 334V336M535.5 323V330M536.5 317V324M537.5 314V316M538.5 315V320M539.5 326V332M540.5 332V336M541.5 330V335M542.5 324V330M543.5 314V318M544.5 314V316M545.5 319V326M546.5 325V332M547.5 334V336M548.5 330V335M549.5 318V325M550.5 315V319M551.5 315V319M552.5 318V325M553.5 330V334M554.5 334V335M555.5 325V331M556.5 320V326M557.5 315V316M558.5 315V319M559.5 324V330M560.5 329V334M561.5 331V334M562.5 326V332M563.5 316V321M564.5 316V317M565.5 318V324M566.5 323V329M567.5 332V334M568.5 331V334M569.5 321V327M570.5 317V322M571.5 316V318M572.5 318V323M573.5 322V328M574.5 332V334M575.5 331V334M576.5 322V328M577.5 318V322M578.5 316V318M579.5 318V322M580.5 327V332M581.5 331V334M582.5 328V332M583.5 322V328M584.5 316V319M585.5 316V318M586.5 322V327M587.5 326V331M588.5 332V333M589.5 328V332M590.5 319V324M591.5 317V320M592.5 318V322M593.5 321V326M594.5 330V333M595.5 332V333M596.5 324V329M597.5 320V324M598.5 317V318M599.5 318V322M600.5 325V330M601.5 329V332M602.5 328V332M603.5 324V329M604.5 318V321M606.5 320V325M607.5 324V330M608.5 331V332M609.5 329V332M610.5 321V326M611.5 318V322M612.5 318V321M613.5 320V325M614.5 328V332M615.5 331V332M616.5 325V330M617.5 321V326M618.5 318V319M619.5 318V321M620.5 324V328M621.5 328V331M622.5 329V332M623.5 326V330M624.5 319V322M625.5 318V320M626.5 320V324M627.5 323V328M628.5 330V332M629.5 329V332M630.5 322V327M631.5 320V323M632.5 318V320M633.5 320V324M634.5 326V330M635.5 330V331M636.5 326V330M637.5 323V327M638.5 320V324M639.5 319V320M640.5 320V323M641.5 326V330M642.5 329V331M643.5 327V330M644.5 323V328M645.5 319V321M646.5 319V320M647.5 322V326M648.5 326V329M650.5 327V330M651.5 321V324M652.5 319V322M653.5 320V323M654.5 322V326M655.5 328V330M656.5 329V330M657.5 324V328M658.5 321V325M660.5 320V322M661.5 325V328M662.5 328V330M663.5 328V330M664.5 324V328M665.5 320V322M667.5 322V325M668.5 324V328M669.5 329V330M670.5 328V330M671.5 322V326M672.5 320V323M673.5 320V322M674.5 322V325M675.5 327V330M676.5 329V330M677.5 325V328M678.5 322V326M679.5 320V321M680.5 320V322M681.5 324V327M682.5 326V329M683.5 328V330M684.5 326V328M685.5 321V324M686.5 320V322M687.5 321V324M688.5 324V327M689.5 328V330M690.5 328V330M691.5 323V326M692.5 321V324M693.5 320V322M694.5 321V324M695.5 326V328M696.5 328V329M697.5 326V328M698.5 324V326M699.5 320V322M700.5 320V322M701.5 323V326M702.5 326V328M703.5 328V329M704.5 326V328M705.5 324V327M706.5 321V322M707.5 321V322M708.5 323V326M709.5 325V328M710.5 328V329M711.5 326V328M712.5 322V325M713.5 321V323M714.5 321V324M715.5 323V326M716.5 327V329M717.5 328V329M718.5 324V327M719.5 322V325M720.5 321V322M721.5 321V323M722.5 324V327M723.5 326V328M724.5 326V328M725.5 324V327M726.5 322V323M727.5 321V322M728.5 322V325M729.5 324V327M731.5 327V328M732.5 323V326M733.5 322V324M734.5 322V323M735.5 322V325M736.5 326V328M738.5 325V328M739.5 323V326M741.5 322V323M742.5 324V326M743.5 326V328M744.5 327V328M745.5 325V328M746.5 322V324M747.5 322V323M748.5 322V324M749.5 324V326M750.5 327V328M751.5 327V328M752.5 324V326M753.5 322V324M754.5 322V323M755.5 322V324M756.5 325V328M757.5 327V328M758.5 326V328M759.5 324V326M760.5 322V323M761.5 322V323M762.5 324V326M763.5 325V327M764.5 327V328M765.5 326V328M766.5 323V325M767.5 322V324M768.5 322V324M769.5 323V326M770.5 326V328M771.5 327V328M772.5 326V328M773.5 323V325M774.5 322V324M775.5 322V324M776.5 323V326M777.5 326V328M778.5 327V328M779.5 324V326M780.5 323V325M781.5 322V323M782.5 322V324M783.5 324V326M784.5 326V328M785.5 326V328M786.5 325V327M787.5 322V324M788.5 322V323M789.5 323V325M790.5 324V326M791.5 326V328M792.5 326V328M793.5 324V326M794.5 322V324M795.5 322V324M796.5 323V325M797.5 326V327M798.5 326V328M799.5 325V327M800.5 324V326M801.5 322V324M802.5 322V324M803.5 324V326M804.5 325V327M805.5 326V327M806.5 325V327M807.5 323V324M808.5 322V324M809.5 323V324M810.5 324V326M811.5 326V327M812.5 326V327M813.5 324V326M814.5 323V325M815.5 322V324M816.5 323V324M817.5 325V327M818.5 326V327M819.5 326V327M820.5 324V326M821.5 323V324M822.5 323V324M823.5 324V326M824.5 325V326M825.5 326V327M826.5 326V327M827.5 323V325M828.5 323V324M829.5 323V324M830.5 324V326M831.5 326V327M832.5 326V327M833.5 324V326M834.5 324V325M835.5 323V324M836.5 323V324M837.5 324V326M838.5 326V327M839.5 326V327M840.5 324V326M841.5 324V325M842.5 323V324M843.5 323V324M844.5 324V326M845.5 326V327M846.5 326V327M847.5 325V326M848.5 323V324M849.5 323V324M850.5 324V325M851.5 324V326M852.5 326V327M853.5 326V327M854.5 324V326M855.5 323V324M856.5 323V324M857.5 324V325M858.5 325V326M859.5 326V327M860.5 325V326M861.5 324V326M862.5 323V324M863.5 323V324M864.5 324V326M865.5 325V326M867.5 325V326M868.5 324V325M869.5 323V324M870.5 324V325M871.5 324V326M874.5 324V326M875.5 324V325M876.5 323V324M878.5 325V326M880.5 325V326M881.5 324V326M882.5 323V324M883.5 323V324M884.5 324V326M885.5 325V326M887.5 325V326M888.5 324V325M891.5 324V325M892.5 325V326M894.5 324V326M895.5 324V325M898.5 324V326M899.5 325V326M900.5 325V326M901.5 324V326M904.5 324V325M905.5 324V326M906.5 325V326M907.5 325V326M908.5 325V326M909.5 324V325M911.5 324V325M912.5 324V326M915.5 324V326M916.5 324V325M918.5 324V325M919.5 325V326M921.5 325V326M922.5 324V326M925.5 324V326M926.5 325V326M928.5 325V326M929.5 324V325M931.5 324V325M932.5 324V326M933.5 325V326M935.5 324V326M936.5 324V325M938.5 324V325M939.5 325V326M940.5 325V326M941.5 325V326M942.5 324V326M945.5 324V325M946.5 324V326M948.5 325V326M949.5 324V325M950.5 324V325M951.5 324V325M952.5 324V325M953.5 325V326M955.5 324V326M956.5 324V325M958.5 324V325M959.5 324V326M960.5 325V326M961.5 325V326M962.5 324V326M963.5 324V325M965.5 324V325M966.5 324V326M967.5 325V326M968.5 325V326M969.5 324V326M970.5 324V325M972.5 324V325M973.5 324V326M974.5 325V326M975.5 325V326M976.5 324V326M977.5 324V325M979.5 324V325M980.5 325V326M981.5 325V326M982.5 325V326M983.5 324V326M986.5 324V326M987.5 325V326M988.5 325V326M989.5 325V326M990.5 324V325M991.5 324V325M992.5 324V325M993.5 324V326M994.5 325V326M995.5 325V326M996.5 324V326M997.5 324V325M999.5 324V325M1000.5 324V326M1001.5 325V326M1002.5 325V326M1003.5 324V326M1004.5 324V325M1006.5 324V325M1007.5 324V326" stroke="#0000ff" stroke-width="1" fill="none"/>
<path d="M27 81.5H1009M32.5 81V574M1008.5 81V574" stroke="#dcdcdc" stroke-width="1" fill="none"/>
<path d="M27 130.5H32" stroke="#dcdcdc"/>
<path d="M27 275.5H32" stroke="#dcdcdc"/>
<path d="M27 324.5H32" stroke="#dcdcdc"/>
<path d="M27 373.5H32" stroke="#dcdcdc"/>
<path d="M27 421.5H32" stroke="#dcdcdc"/>
<path d="M27 470.5H32" stroke="#dcdcdc"/>
<path d="M227.5 569V574" stroke="#dcdcdc"/>
<path d="M325.5 569V574" stroke="#dcdcdc"/>
<path d="M520.5 569V574" stroke="#dcdcdc"/>
<path d="M617.5 569V574" stroke="#dcdcdc"/>
<path d="M715.5 569V574" stroke="#dcdcdc"/>
<path d="M812.5 569V574" stroke="#dcdcdc"/>
<path d="M910.5 569V574" stroke="#dcdcdc"/>
<path d="M32.5 325V203M32 203.5H36M33 325.5H1008" stroke="#00ff00" stroke-width="1" fill="none"/>
<path d="M35 325.5H1008" stroke="#ff00ff" stroke-width="1" stroke-dasharray="2 2 4 4 3 1 1 2 4 4 4 2 2 2 4 5 3 3" stroke-dashoffset="-3" fill="none"/>
<path d="M47.5 83V567" stroke="#ffffff" stroke-width="1" stroke-dasharray="2 2" fill="none"/>
<path d="M47.5 299V423" stroke="#0000ff" stroke-width="1" fill="none"/>
<path d="M47.5 299V423" stroke="#ffff00" stroke-width="1" stroke-dasharray="2 2" fill="none"/>
<path d="M996.5 83V567M1003.5 83V567" stroke="#ffffff" stroke-width="1" stroke-dasharray="2 2" fill="none"/>
<path d="M258 68.5H295M294.5 68V81" stroke="#ffffff" stroke-width="1" stroke-dasharray="1 1" fill="none"/>
</g>
<text x="26.5" y="85.1" font-size="10.3" fill="#e6e6e6" stroke="#e6e6e6" stroke-width="0.12" text-anchor="end" textLength="22.5" lengthAdjust="spacingAndGlyphs">200V</text>
<text x="26.5" y="133.7" font-size="10.3" fill="#e6e6e6" stroke="#e6e6e6" stroke-width="0.12" text-anchor="end" textLength="22.5" lengthAdjust="spacingAndGlyphs">160V</text>
<text x="26.5" y="182.3" font-size="10.3" fill="#e6e6e6" stroke="#e6e6e6" stroke-width="0.12" text-anchor="end" textLength="22.5" lengthAdjust="spacingAndGlyphs">120V</text>
<text x="26.5" y="230.9" font-size="10.3" fill="#e6e6e6" stroke="#e6e6e6" stroke-width="0.12" text-anchor="end" textLength="17.0" lengthAdjust="spacingAndGlyphs">80V</text>
<text x="26.5" y="279.5" font-size="10.3" fill="#e6e6e6" stroke="#e6e6e6" stroke-width="0.12" text-anchor="end" textLength="17.0" lengthAdjust="spacingAndGlyphs">40V</text>
<text x="26.5" y="328.1" font-size="10.3" fill="#e6e6e6" stroke="#e6e6e6" stroke-width="0.12" text-anchor="end" textLength="11.5" lengthAdjust="spacingAndGlyphs">0V</text>
<text x="26.5" y="376.7" font-size="10.3" fill="#e6e6e6" stroke="#e6e6e6" stroke-width="0.12" text-anchor="end" textLength="20.0" lengthAdjust="spacingAndGlyphs">-40V</text>
<text x="26.5" y="425.3" font-size="10.3" fill="#e6e6e6" stroke="#e6e6e6" stroke-width="0.12" text-anchor="end" textLength="20.0" lengthAdjust="spacingAndGlyphs">-80V</text>
<text x="26.5" y="473.9" font-size="10.3" fill="#e6e6e6" stroke="#e6e6e6" stroke-width="0.12" text-anchor="end" textLength="25.5" lengthAdjust="spacingAndGlyphs">-120V</text>
<text x="26.5" y="522.5" font-size="10.3" fill="#e6e6e6" stroke="#e6e6e6" stroke-width="0.12" text-anchor="end" textLength="25.5" lengthAdjust="spacingAndGlyphs">-160V</text>
<text x="26.5" y="571.1" font-size="10.3" fill="#e6e6e6" stroke="#e6e6e6" stroke-width="0.12" text-anchor="end" textLength="25.5" lengthAdjust="spacingAndGlyphs">-200V</text>
<text x="19.0" y="583.8" font-size="10.3" fill="#e6e6e6" stroke="#e6e6e6" stroke-width="0.12" textLength="27.0" lengthAdjust="spacingAndGlyphs">0.0ms</text>
<text x="116.6" y="583.8" font-size="10.3" fill="#e6e6e6" stroke="#e6e6e6" stroke-width="0.12" textLength="27.0" lengthAdjust="spacingAndGlyphs">0.3ms</text>
<text x="214.1" y="583.8" font-size="10.3" fill="#e6e6e6" stroke="#e6e6e6" stroke-width="0.12" textLength="27.0" lengthAdjust="spacingAndGlyphs">0.6ms</text>
<text x="311.6" y="583.8" font-size="10.3" fill="#e6e6e6" stroke="#e6e6e6" stroke-width="0.12" textLength="27.0" lengthAdjust="spacingAndGlyphs">0.9ms</text>
<text x="409.2" y="583.8" font-size="10.3" fill="#e6e6e6" stroke="#e6e6e6" stroke-width="0.12" textLength="27.0" lengthAdjust="spacingAndGlyphs">1.2ms</text>
<text x="506.8" y="583.8" font-size="10.3" fill="#e6e6e6" stroke="#e6e6e6" stroke-width="0.12" textLength="27.0" lengthAdjust="spacingAndGlyphs">1.5ms</text>
<text x="604.3" y="583.8" font-size="10.3" fill="#e6e6e6" stroke="#e6e6e6" stroke-width="0.12" textLength="27.0" lengthAdjust="spacingAndGlyphs">1.8ms</text>
<text x="701.9" y="583.8" font-size="10.3" fill="#e6e6e6" stroke="#e6e6e6" stroke-width="0.12" textLength="27.0" lengthAdjust="spacingAndGlyphs">2.1ms</text>
<text x="799.4" y="583.8" font-size="10.3" fill="#e6e6e6" stroke="#e6e6e6" stroke-width="0.12" textLength="27.0" lengthAdjust="spacingAndGlyphs">2.4ms</text>
<text x="896.9" y="583.8" font-size="10.3" fill="#e6e6e6" stroke="#e6e6e6" stroke-width="0.12" textLength="27.0" lengthAdjust="spacingAndGlyphs">2.7ms</text>
<text x="994.0" y="583.8" font-size="10.3" fill="#e6e6e6" stroke="#e6e6e6" stroke-width="0.12" textLength="27.0" lengthAdjust="spacingAndGlyphs">3.0ms</text>
<text x="259.0" y="78.0" font-size="9.8" fill="#0000ff" stroke="#0000ff" stroke-width="0.45" textLength="33.5" lengthAdjust="spacingAndGlyphs">V(n003)</text>
<text x="747.0" y="78.0" font-size="9.8" fill="#00ff00" stroke="#00ff00" stroke-width="0.45" textLength="33.5" lengthAdjust="spacingAndGlyphs">V(n001)</text>
</svg>
<div class="dlg" style="left:197px;top:93px"><svg width="190" height="139" viewBox="0 0 190 139" shape-rendering="crispEdges"><rect x="2" y="2" width="186" height="135" fill="url(#dz)"/></svg><div class="dt" style="top:2px"></div><div class="grp" style="top:19px;height:34px"></div><div class="grp" style="top:58px;height:34px"></div><div class="grp" style="top:98px;height:39px"></div><svg width="190" height="139" viewBox="0 0 190 139" shape-rendering="crispEdges"><rect x="7" y="16" width="30" height="6" fill="url(#dz)"/><rect x="7" y="55" width="30" height="6" fill="url(#dz)"/><rect x="7" y="95" width="78" height="6" fill="url(#dz)"/></svg><div class="ed" style="left:25px;top:36px;height:14px;"></div><div class="ed" style="left:121px;top:36px;height:14px;width:65px;"></div><div class="ed" style="left:25px;top:77px;height:13px;"></div><div class="ed" style="left:121px;top:77px;height:13px;width:65px;"></div><div class="ed" style="left:25px;top:104px;height:13px;"></div><div class="ed" style="left:121px;top:104px;height:13px;width:65px;"></div><div class="ed" style="left:25px;top:120px;height:13px;"></div><div class="ed" style="left:121px;top:120px;height:13px;width:65px;"></div><svg width="190" height="139" viewBox="0 0 190 139"><text x="3.5" y="11.2" font-size="9.2" font-weight="bold" fill="#fff" textLength="24.5" lengthAdjust="spacingAndGlyphs">Draft5</text><g transform="translate(0,-1)"><g shape-rendering="crispEdges"><rect x="176" y="4" width="11" height="10" fill="url(#dz)"/><path d="M176 4.5h11M176.5 4v10" stroke="#fff" fill="none"/><path d="M176 13.5h11M186.5 4v10" stroke="#404040" fill="none"/><path d="M177 12.5h9M185.5 5v8" stroke="#808080" fill="none"/></g><path d="M179 6.3l5 4.8M184 6.3l-5 4.8" stroke="#000" stroke-width="1.4"/></g><text x="8.5" y="23.0" font-size="8.8" fill="#000" stroke="#000" stroke-width="0.30" textLength="27.0" lengthAdjust="spacingAndGlyphs">Cursor 1</text><text x="8.5" y="61.8" font-size="8.8" fill="#000" stroke="#000" stroke-width="0.30" textLength="27.0" lengthAdjust="spacingAndGlyphs">Cursor 2</text><text x="8.5" y="101.8" font-size="8.8" fill="#000" stroke="#000" stroke-width="0.30" textLength="75.5" lengthAdjust="spacingAndGlyphs">Diff (Cursor 2 - Cursor 1)</text><text x="81.5" y="29.8" font-size="8.8" fill="#000" stroke="#000" stroke-width="0.30" textLength="27.0" lengthAdjust="spacingAndGlyphs">V(n003)</text><text x="81.5" y="70.2" font-size="8.8" fill="#000" stroke="#000" stroke-width="0.30" textLength="27.0" lengthAdjust="spacingAndGlyphs">V(n003)</text><text x="5.0" y="46.0" font-size="8.8" fill="#000" stroke="#000" stroke-width="0.30" textLength="16.5" lengthAdjust="spacingAndGlyphs">Horz:</text><text x="101.0" y="46.0" font-size="8.8" fill="#000" stroke="#000" stroke-width="0.30" textLength="15.0" lengthAdjust="spacingAndGlyphs">Vert:</text><text x="5.0" y="85.5" font-size="8.8" fill="#000" stroke="#000" stroke-width="0.30" textLength="16.5" lengthAdjust="spacingAndGlyphs">Horz:</text><text x="101.0" y="85.5" font-size="8.8" fill="#000" stroke="#000" stroke-width="0.30" textLength="15.0" lengthAdjust="spacingAndGlyphs">Vert:</text><text x="5.0" y="114.0" font-size="8.8" fill="#000" stroke="#000" stroke-width="0.30" textLength="16.5" lengthAdjust="spacingAndGlyphs">Horz:</text><text x="101.0" y="114.0" font-size="8.8" fill="#000" stroke="#000" stroke-width="0.30" textLength="15.0" lengthAdjust="spacingAndGlyphs">Vert:</text><text x="5.8" y="130.0" font-size="8.8" fill="#000" stroke="#000" stroke-width="0.30" textLength="15.6" lengthAdjust="spacingAndGlyphs">Freq:</text><text x="96.0" y="130.0" font-size="8.8" fill="#000" stroke="#000" stroke-width="0.30" textLength="19.5" lengthAdjust="spacingAndGlyphs">Slope:</text><text x="28.0" y="46.0" font-size="8.8" fill="#000" stroke="#000" stroke-width="0.30" textLength="36.0" lengthAdjust="spacingAndGlyphs">25.9696µs</text><text x="124.0" y="46.0" font-size="8.8" fill="#000" stroke="#000" stroke-width="0.30" textLength="40.0" lengthAdjust="spacingAndGlyphs">10.6032mV</text><text x="28.0" y="85.5" font-size="8.8" fill="#000" stroke="#000" stroke-width="0.30" textLength="36.0" lengthAdjust="spacingAndGlyphs">46.7124µs</text><text x="124.0" y="85.5" font-size="8.8" fill="#000" stroke="#000" stroke-width="0.30" textLength="41.5" lengthAdjust="spacingAndGlyphs">-300.102mV</text><text x="28.0" y="114.0" font-size="8.8" fill="#000" stroke="#000" stroke-width="0.30" textLength="36.0" lengthAdjust="spacingAndGlyphs">20.7428µs</text><text x="124.0" y="114.0" font-size="8.8" fill="#000" stroke="#000" stroke-width="0.30" textLength="41.5" lengthAdjust="spacingAndGlyphs">-100.408mV</text><text x="28.0" y="130.0" font-size="8.8" fill="#000" stroke="#000" stroke-width="0.30" textLength="42.0" lengthAdjust="spacingAndGlyphs">47.9781KHz</text><text x="124.0" y="130.0" font-size="8.8" fill="#000" stroke="#000" stroke-width="0.30" textLength="30.0" lengthAdjust="spacingAndGlyphs">-5091.79</text></svg></div>
<div class="dlg" style="left:797px;top:167px"><svg width="190" height="139" viewBox="0 0 190 139" shape-rendering="crispEdges"><rect x="2" y="2" width="186" height="135" fill="url(#dz)"/></svg><div class="dt" style="top:3px"></div><div class="grp" style="top:20px;height:33px"></div><div class="grp" style="top:59px;height:33px"></div><div class="grp" style="top:98px;height:39px"></div><svg width="190" height="139" viewBox="0 0 190 139" shape-rendering="crispEdges"><rect x="7" y="17" width="30" height="6" fill="url(#dz)"/><rect x="7" y="56" width="30" height="6" fill="url(#dz)"/><rect x="7" y="95" width="78" height="6" fill="url(#dz)"/></svg><div class="ed" style="left:25px;top:36px;height:14px;"></div><div class="ed" style="left:121px;top:36px;height:14px;width:65px;"></div><div class="ed" style="left:25px;top:77px;height:13px;"></div><div class="ed" style="left:121px;top:77px;height:13px;width:65px;"></div><div class="ed" style="left:25px;top:104px;height:13px;"></div><div class="ed" style="left:121px;top:104px;height:13px;width:65px;"></div><div class="ed" style="left:25px;top:120px;height:13px;"></div><div class="ed" style="left:121px;top:120px;height:13px;width:65px;"></div><svg width="190" height="139" viewBox="0 0 190 139"><text x="3.5" y="12.2" font-size="9.2" font-weight="bold" fill="#fff" textLength="24.5" lengthAdjust="spacingAndGlyphs">Draft5</text><g transform="translate(0,0)"><g shape-rendering="crispEdges"><rect x="176" y="4" width="11" height="10" fill="url(#dz)"/><path d="M176 4.5h11M176.5 4v10" stroke="#fff" fill="none"/><path d="M176 13.5h11M186.5 4v10" stroke="#404040" fill="none"/><path d="M177 12.5h9M185.5 5v8" stroke="#808080" fill="none"/></g><path d="M179 6.3l5 4.8M184 6.3l-5 4.8" stroke="#000" stroke-width="1.4"/></g><text x="8.5" y="24.0" font-size="8.8" fill="#000" stroke="#000" stroke-width="0.30" textLength="27.0" lengthAdjust="spacingAndGlyphs">Cursor 1</text><text x="8.5" y="62.8" font-size="8.8" fill="#000" stroke="#000" stroke-width="0.30" textLength="27.0" lengthAdjust="spacingAndGlyphs">Cursor 2</text><text x="8.5" y="101.8" font-size="8.8" fill="#000" stroke="#000" stroke-width="0.30" textLength="75.5" lengthAdjust="spacingAndGlyphs">Diff (Cursor 2 - Cursor 1)</text><text x="81.5" y="30.8" font-size="8.8" fill="#000" stroke="#000" stroke-width="0.30" textLength="27.0" lengthAdjust="spacingAndGlyphs">V(n003)</text><text x="81.5" y="71.2" font-size="8.8" fill="#000" stroke="#000" stroke-width="0.30" textLength="27.0" lengthAdjust="spacingAndGlyphs">V(n003)</text><text x="5.0" y="46.0" font-size="8.8" fill="#000" stroke="#000" stroke-width="0.30" textLength="16.5" lengthAdjust="spacingAndGlyphs">Horz:</text><text x="101.0" y="46.0" font-size="8.8" fill="#000" stroke="#000" stroke-width="0.30" textLength="15.0" lengthAdjust="spacingAndGlyphs">Vert:</text><text x="5.0" y="85.5" font-size="8.8" fill="#000" stroke="#000" stroke-width="0.30" textLength="16.5" lengthAdjust="spacingAndGlyphs">Horz:</text><text x="101.0" y="85.5" font-size="8.8" fill="#000" stroke="#000" stroke-width="0.30" textLength="15.0" lengthAdjust="spacingAndGlyphs">Vert:</text><text x="5.0" y="114.0" font-size="8.8" fill="#000" stroke="#000" stroke-width="0.30" textLength="16.5" lengthAdjust="spacingAndGlyphs">Horz:</text><text x="101.0" y="114.0" font-size="8.8" fill="#000" stroke="#000" stroke-width="0.30" textLength="15.0" lengthAdjust="spacingAndGlyphs">Vert:</text><text x="5.8" y="130.0" font-size="8.8" fill="#000" stroke="#000" stroke-width="0.30" textLength="15.6" lengthAdjust="spacingAndGlyphs">Freq:</text><text x="96.0" y="130.0" font-size="8.8" fill="#000" stroke="#000" stroke-width="0.30" textLength="19.5" lengthAdjust="spacingAndGlyphs">Slope:</text><text x="28.0" y="46.0" font-size="8.8" fill="#000" stroke="#000" stroke-width="0.30" textLength="36.5" lengthAdjust="spacingAndGlyphs">2.95423ms</text><text x="124.0" y="46.0" font-size="8.8" fill="#000" stroke="#000" stroke-width="0.30" textLength="35.0" lengthAdjust="spacingAndGlyphs">-95.566µV</text><text x="28.0" y="85.5" font-size="8.8" fill="#000" stroke="#000" stroke-width="0.30" textLength="36.5" lengthAdjust="spacingAndGlyphs">2.97508ms</text><text x="124.0" y="85.5" font-size="8.8" fill="#000" stroke="#000" stroke-width="0.30" textLength="40.0" lengthAdjust="spacingAndGlyphs">-498.254µV</text><text x="28.0" y="114.0" font-size="8.8" fill="#000" stroke="#000" stroke-width="0.30" textLength="35.0" lengthAdjust="spacingAndGlyphs">20.8363µs</text><text x="124.0" y="114.0" font-size="8.8" fill="#000" stroke="#000" stroke-width="0.30" textLength="40.0" lengthAdjust="spacingAndGlyphs">-402.688µV</text><text x="28.0" y="130.0" font-size="8.8" fill="#000" stroke="#000" stroke-width="0.30" textLength="41.0" lengthAdjust="spacingAndGlyphs">47.9921KHz</text><text x="124.0" y="130.0" font-size="8.8" fill="#000" stroke="#000" stroke-width="0.30" textLength="30.0" lengthAdjust="spacingAndGlyphs">-19.3257</text></svg></div>
<svg width="1024" height="604" viewBox="0 0 1024 604">
<rect x="612" y="346" width="333" height="210" fill="url(#ds)" shape-rendering="crispEdges"/>
<path d="M614 348h1v1h-1zM614 358h1v1h-1zM614 369h1v1h-1zM614 379h1v1h-1zM614 389h1v1h-1zM614 399h1v1h-1zM614 420h1v1h-1zM614 430h1v1h-1zM614 440h1v1h-1zM614 450h1v1h-1zM614 460h1v1h-1zM614 471h1v1h-1zM614 491h1v1h-1zM614 501h1v1h-1zM614 511h1v1h-1zM614 532h1v1h-1zM645 348h1v1h-1zM645 358h1v1h-1zM645 369h1v1h-1zM645 379h1v1h-1zM645 389h1v1h-1zM645 399h1v1h-1zM645 420h1v1h-1zM645 430h1v1h-1zM645 440h1v1h-1zM645 450h1v1h-1zM645 460h1v1h-1zM645 471h1v1h-1zM645 491h1v1h-1zM645 501h1v1h-1zM645 511h1v1h-1zM645 532h1v1h-1zM655 348h1v1h-1zM655 358h1v1h-1zM655 369h1v1h-1zM655 379h1v1h-1zM655 389h1v1h-1zM655 399h1v1h-1zM655 420h1v1h-1zM655 430h1v1h-1zM655 440h1v1h-1zM655 450h1v1h-1zM655 460h1v1h-1zM655 471h1v1h-1zM655 491h1v1h-1zM655 501h1v1h-1zM655 511h1v1h-1zM655 532h1v1h-1zM666 348h1v1h-1zM666 358h1v1h-1zM666 369h1v1h-1zM666 379h1v1h-1zM666 389h1v1h-1zM666 399h1v1h-1zM666 420h1v1h-1zM666 430h1v1h-1zM666 440h1v1h-1zM666 450h1v1h-1zM666 460h1v1h-1zM666 471h1v1h-1zM666 491h1v1h-1zM666 501h1v1h-1zM666 511h1v1h-1zM666 532h1v1h-1zM676 348h1v1h-1zM676 358h1v1h-1zM676 369h1v1h-1zM676 379h1v1h-1zM676 389h1v1h-1zM676 399h1v1h-1zM676 420h1v1h-1zM676 430h1v1h-1zM676 440h1v1h-1zM676 450h1v1h-1zM676 460h1v1h-1zM676 471h1v1h-1zM676 491h1v1h-1zM676 501h1v1h-1zM676 511h1v1h-1zM676 532h1v1h-1zM727 348h1v1h-1zM727 358h1v1h-1zM727 369h1v1h-1zM727 379h1v1h-1zM727 389h1v1h-1zM727 399h1v1h-1zM727 420h1v1h-1zM727 430h1v1h-1zM727 440h1v1h-1zM727 450h1v1h-1zM727 460h1v1h-1zM727 471h1v1h-1zM727 491h1v1h-1zM727 501h1v1h-1zM727 511h1v1h-1zM727 532h1v1h-1zM737 348h1v1h-1zM737 358h1v1h-1zM737 369h1v1h-1zM737 379h1v1h-1zM737 389h1v1h-1zM737 399h1v1h-1zM737 420h1v1h-1zM737 430h1v1h-1zM737 440h1v1h-1zM737 450h1v1h-1zM737 460h1v1h-1zM737 471h1v1h-1zM737 491h1v1h-1zM737 501h1v1h-1zM737 511h1v1h-1zM737 532h1v1h-1zM747 348h1v1h-1zM747 358h1v1h-1zM747 369h1v1h-1zM747 379h1v1h-1zM747 389h1v1h-1zM747 399h1v1h-1zM747 420h1v1h-1zM747 430h1v1h-1zM747 440h1v1h-1zM747 450h1v1h-1zM747 460h1v1h-1zM747 471h1v1h-1zM747 491h1v1h-1zM747 501h1v1h-1zM747 511h1v1h-1zM747 532h1v1h-1zM757 348h1v1h-1zM757 358h1v1h-1zM757 369h1v1h-1zM757 379h1v1h-1zM757 389h1v1h-1zM757 399h1v1h-1zM757 420h1v1h-1zM757 430h1v1h-1zM757 440h1v1h-1zM757 450h1v1h-1zM757 460h1v1h-1zM757 471h1v1h-1zM757 491h1v1h-1zM757 501h1v1h-1zM757 511h1v1h-1zM757 532h1v1h-1zM768 348h1v1h-1zM768 358h1v1h-1zM768 369h1v1h-1zM768 379h1v1h-1zM768 389h1v1h-1zM768 399h1v1h-1zM768 420h1v1h-1zM768 430h1v1h-1zM768 440h1v1h-1zM768 450h1v1h-1zM768 460h1v1h-1zM768 471h1v1h-1zM768 491h1v1h-1zM768 501h1v1h-1zM768 511h1v1h-1zM768 532h1v1h-1zM778 348h1v1h-1zM778 358h1v1h-1zM778 369h1v1h-1zM778 379h1v1h-1zM778 389h1v1h-1zM778 399h1v1h-1zM778 420h1v1h-1zM778 430h1v1h-1zM778 440h1v1h-1zM778 450h1v1h-1zM778 460h1v1h-1zM778 471h1v1h-1zM778 491h1v1h-1zM778 501h1v1h-1zM778 511h1v1h-1zM778 532h1v1h-1zM798 348h1v1h-1zM798 358h1v1h-1zM798 369h1v1h-1zM798 379h1v1h-1zM798 389h1v1h-1zM798 399h1v1h-1zM798 420h1v1h-1zM798 430h1v1h-1zM798 440h1v1h-1zM798 450h1v1h-1zM798 460h1v1h-1zM798 471h1v1h-1zM798 491h1v1h-1zM798 501h1v1h-1zM798 511h1v1h-1zM798 532h1v1h-1zM818 348h1v1h-1zM818 358h1v1h-1zM818 369h1v1h-1zM818 379h1v1h-1zM818 389h1v1h-1zM818 399h1v1h-1zM818 420h1v1h-1zM818 430h1v1h-1zM818 440h1v1h-1zM818 450h1v1h-1zM818 460h1v1h-1zM818 471h1v1h-1zM818 491h1v1h-1zM818 501h1v1h-1zM818 511h1v1h-1zM818 532h1v1h-1zM829 348h1v1h-1zM829 358h1v1h-1zM829 369h1v1h-1zM829 379h1v1h-1zM829 389h1v1h-1zM829 399h1v1h-1zM829 420h1v1h-1zM829 430h1v1h-1zM829 440h1v1h-1zM829 450h1v1h-1zM829 460h1v1h-1zM829 471h1v1h-1zM829 491h1v1h-1zM829 501h1v1h-1zM829 511h1v1h-1zM829 532h1v1h-1zM839 348h1v1h-1zM839 358h1v1h-1zM839 369h1v1h-1zM839 379h1v1h-1zM839 389h1v1h-1zM839 399h1v1h-1zM839 420h1v1h-1zM839 430h1v1h-1zM839 440h1v1h-1zM839 450h1v1h-1zM839 460h1v1h-1zM839 471h1v1h-1zM839 491h1v1h-1zM839 501h1v1h-1zM839 511h1v1h-1zM839 532h1v1h-1zM849 348h1v1h-1zM849 358h1v1h-1zM849 369h1v1h-1zM849 379h1v1h-1zM849 389h1v1h-1zM849 399h1v1h-1zM849 420h1v1h-1zM849 430h1v1h-1zM849 440h1v1h-1zM849 450h1v1h-1zM849 460h1v1h-1zM849 471h1v1h-1zM849 491h1v1h-1zM849 501h1v1h-1zM849 511h1v1h-1zM849 532h1v1h-1zM859 348h1v1h-1zM859 358h1v1h-1zM859 369h1v1h-1zM859 379h1v1h-1zM859 389h1v1h-1zM859 399h1v1h-1zM859 420h1v1h-1zM859 430h1v1h-1zM859 440h1v1h-1zM859 450h1v1h-1zM859 460h1v1h-1zM859 471h1v1h-1zM859 491h1v1h-1zM859 501h1v1h-1zM859 511h1v1h-1zM859 532h1v1h-1zM870 348h1v1h-1zM870 358h1v1h-1zM870 369h1v1h-1zM870 379h1v1h-1zM870 389h1v1h-1zM870 399h1v1h-1zM870 420h1v1h-1zM870 430h1v1h-1zM870 440h1v1h-1zM870 450h1v1h-1zM870 460h1v1h-1zM870 471h1v1h-1zM870 491h1v1h-1zM870 501h1v1h-1zM870 511h1v1h-1zM870 532h1v1h-1zM880 348h1v1h-1zM880 358h1v1h-1zM880 369h1v1h-1zM880 379h1v1h-1zM880 389h1v1h-1zM880 399h1v1h-1zM880 420h1v1h-1zM880 430h1v1h-1zM880 440h1v1h-1zM880 450h1v1h-1zM880 460h1v1h-1zM880 471h1v1h-1zM880 491h1v1h-1zM880 501h1v1h-1zM880 511h1v1h-1zM880 532h1v1h-1zM900 348h1v1h-1zM900 358h1v1h-1zM900 369h1v1h-1zM900 379h1v1h-1zM900 389h1v1h-1zM900 399h1v1h-1zM900 420h1v1h-1zM900 430h1v1h-1zM900 440h1v1h-1zM900 450h1v1h-1zM900 460h1v1h-1zM900 471h1v1h-1zM900 491h1v1h-1zM900 501h1v1h-1zM900 511h1v1h-1zM900 532h1v1h-1zM910 348h1v1h-1zM910 358h1v1h-1zM910 369h1v1h-1zM910 379h1v1h-1zM910 389h1v1h-1zM910 399h1v1h-1zM910 420h1v1h-1zM910 430h1v1h-1zM910 440h1v1h-1zM910 450h1v1h-1zM910 460h1v1h-1zM910 471h1v1h-1zM910 491h1v1h-1zM910 501h1v1h-1zM910 511h1v1h-1zM910 532h1v1h-1zM920 348h1v1h-1zM920 358h1v1h-1zM920 369h1v1h-1zM920 379h1v1h-1zM920 389h1v1h-1zM920 399h1v1h-1zM920 420h1v1h-1zM920 430h1v1h-1zM920 440h1v1h-1zM920 450h1v1h-1zM920 460h1v1h-1zM920 471h1v1h-1zM920 491h1v1h-1zM920 501h1v1h-1zM920 511h1v1h-1zM920 532h1v1h-1zM931 348h1v1h-1zM931 358h1v1h-1zM931 369h1v1h-1zM931 379h1v1h-1zM931 389h1v1h-1zM931 399h1v1h-1zM931 420h1v1h-1zM931 430h1v1h-1zM931 440h1v1h-1zM931 450h1v1h-1zM931 460h1v1h-1zM931 471h1v1h-1zM931 491h1v1h-1zM931 501h1v1h-1zM931 511h1v1h-1zM931 532h1v1h-1zM941 348h1v1h-1zM941 358h1v1h-1zM941 369h1v1h-1zM941 379h1v1h-1zM941 389h1v1h-1zM941 399h1v1h-1zM941 420h1v1h-1zM941 430h1v1h-1zM941 440h1v1h-1zM941 450h1v1h-1zM941 460h1v1h-1zM941 471h1v1h-1zM941 491h1v1h-1zM941 501h1v1h-1zM941 511h1v1h-1zM941 532h1v1h-1z" fill="#101010" shape-rendering="crispEdges"/>
<g fill="none" stroke="#0000ff" stroke-width="1.25">
<path d="M665.5 455V419.5H758M807.5 419.5H834M873 419.5H889.5V488M889.5 493.5V521.5H665.5V494.5"/>
</g>
<rect x="795" y="518.5" width="6" height="6.5" fill="#0000ff"/>
<g fill="none" stroke="#000098" stroke-width="1">
<path d="M758 419.5l5.5-9" stroke-dasharray="3 2"/><path d="M802 410.5l5.5 9" stroke-dasharray="3 2"/>
<path d="M770.5 410.5c4 3 7 3 8 0M770.5 425.5c3-3 6-3 8 0M774.5 412v13" stroke-dasharray="2.2 1.4"/>
<path d="M787 410.5c3-1.5 6-1.5 8 0M790.5 411.5c-2 4-2 10 0 14 2-4 2-10 0-14" stroke-dasharray="2.2 1.4"/>
<path d="M834 419.5l4-9 10.5 19 10.2-19 9.8 19 4.5-10" stroke-dasharray="4 1.3"/>
<path d="M878 488.5h22M878 493.5h22" stroke-width="1.2"/>
<circle cx="664.8" cy="474.8" r="20" stroke-dasharray="3.2 1.8"/>
<path d="M650 480C652 465 660 464 665.5 475S677 488 681.5 474" stroke-dasharray="3.2 1.8"/>
<path d="M661.5 460.5h7M665 457v7"/>
<path d="M798 525v6.5M786 531.5h23.5M786.5 532l11.5 11 11.5-11" stroke-dasharray="5 1.2"/>
</g>
<text x="664.7" y="378.2" font-size="14.2" font-weight="bold" fill="#0a0a0a" textLength="227.0" lengthAdjust="spacingAndGlyphs">PULSE(0 100 0 10n 10n 10u 0 1)</text>
<text x="773.4" y="405.8" font-size="14.2" font-weight="bold" fill="#0a0a0a" textLength="15.2" lengthAdjust="spacingAndGlyphs">L1</text>
<text x="844.4" y="405.8" font-size="14.2" font-weight="bold" fill="#0a0a0a" textLength="17.2" lengthAdjust="spacingAndGlyphs">R1</text>
<text x="764.8" y="439.5" font-size="14.2" font-weight="bold" fill="#0a0a0a" textLength="33.6" lengthAdjust="spacingAndGlyphs">500µ</text>
<text x="849.9" y="442.2" font-size="14.2" font-weight="bold" fill="#0a0a0a" textLength="7.4" lengthAdjust="spacingAndGlyphs">2</text>
<text x="680.3" y="454.6" font-size="14.2" font-weight="bold" fill="#0a0a0a" textLength="16.4" lengthAdjust="spacingAndGlyphs">V1</text>
<text x="894.6" y="480.6" font-size="14.2" font-weight="bold" fill="#0a0a0a" textLength="17.0" lengthAdjust="spacingAndGlyphs">C1</text>
<text x="894.6" y="510.4" font-size="14.2" font-weight="bold" fill="#0a0a0a" textLength="26.0" lengthAdjust="spacingAndGlyphs">22n</text>
<text x="644.0" y="545.2" font-size="14.2" font-weight="bold" fill="#0a0a0a" textLength="104.6" lengthAdjust="spacingAndGlyphs">.tran 0 3m 0 5n</text>
</svg>
</body></html>
